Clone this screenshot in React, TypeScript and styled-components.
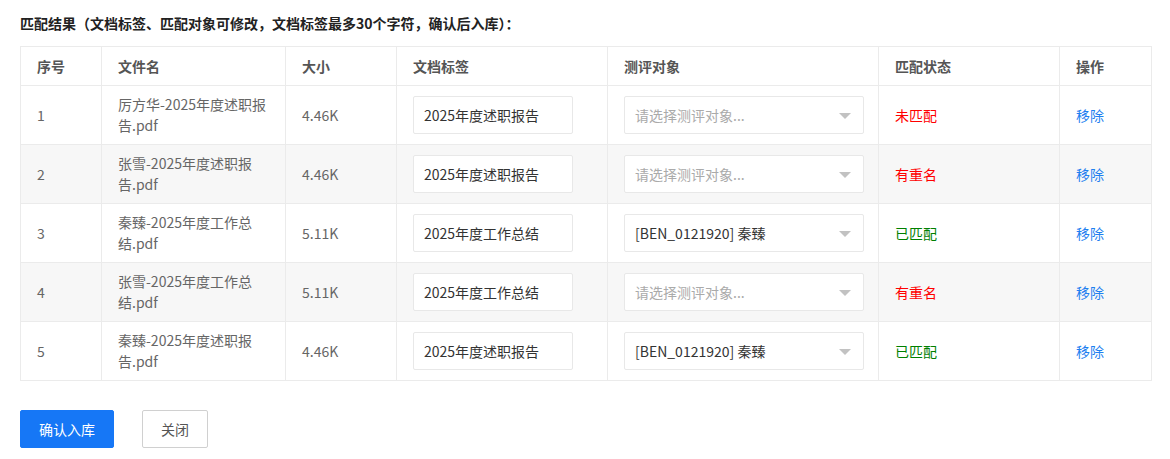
import React, { useState } from 'react';
import styled, { createGlobalStyle } from 'styled-components';

const GlobalStyle = createGlobalStyle`
  body {
    margin: 0;
    background: #fff;
    font-family: "Noto Sans CJK SC", "Noto Sans", sans-serif;
  }
`;

type Status = 'none' | 'dup' | 'ok';

const rows: { name: string; size: string; tag: string; target: string; status: Status }[] = [
  { name: '厉方华-2025年度述职报告.pdf', size: '4.46K', tag: '2025年度述职报告', target: '', status: 'none' },
  { name: '张雪-2025年度述职报告.pdf', size: '4.46K', tag: '2025年度述职报告', target: '', status: 'dup' },
  { name: '秦臻-2025年度工作总结.pdf', size: '5.11K', tag: '2025年度工作总结', target: '[BEN_0121920] 秦臻', status: 'ok' },
  { name: '张雪-2025年度工作总结.pdf', size: '5.11K', tag: '2025年度工作总结', target: '', status: 'dup' },
  { name: '秦臻-2025年度述职报告.pdf', size: '4.46K', tag: '2025年度述职报告', target: '[BEN_0121920] 秦臻', status: 'ok' },
];

const statusText: Record<Status, string> = { none: '未匹配', dup: '有重名', ok: '已匹配' };

const Page = styled.div`
  padding: 12px 20px 10px 20px;
`;

const Heading = styled.div`
  font-size: 14px;
  font-weight: bold;
  color: #222;
  line-height: 22px;
  margin-bottom: 12px;
`;

const Table = styled.table`
  width: 1131px;
  border-collapse: collapse;
  table-layout: fixed;
  font-size: 14px;
`;

const Col = styled.col<{ w: number }>`
  width: ${p => p.w}px;
`;

const Th = styled.th`
  height: 38px;
  padding: 0 16px;
  text-align: left;
  font-weight: bold;
  color: #555;
  border: 1px solid #ebebeb;
`;

const Tr = styled.tr<{ striped: boolean }>`
  background: ${p => (p.striped ? '#f7f7f7' : '#fff')};
`;

const Td = styled.td`
  height: 58px;
  padding: 0 16px;
  color: #666;
  line-height: 21px;
  border: 1px solid #ebebeb;
  vertical-align: middle;
  word-break: break-all;
`;

const TagInput = styled.input`
  box-sizing: border-box;
  width: 160px;
  height: 38px;
  padding: 0 10px;
  border: 1px solid #e8e8e8;
  border-radius: 2px;
  font-family: inherit;
  font-size: 14px;
  color: #333;
  background: #fff;
  outline: none;
`;

const Select = styled.div`
  box-sizing: border-box;
  width: 240px;
  height: 38px;
  padding: 0 12px 0 10px;
  border: 1px solid #e8e8e8;
  border-radius: 2px;
  background: #fff;
  display: flex;
  align-items: center;
  justify-content: space-between;
`;

const SelectText = styled.span<{ placeholder: boolean }>`
  color: ${p => (p.placeholder ? '#aaa' : '#333')};
  font-size: 14px;
`;

const Arrow = styled.span`
  width: 0;
  height: 0;
  border-left: 6px solid transparent;
  border-right: 6px solid transparent;
  border-top: 6px solid #c2c2c2;
  margin-top: 1px;
`;

const StatusLabel = styled.span<{ status: Status }>`
  color: ${p => (p.status === 'ok' ? '#008000' : '#ff0000')};
`;

const Link = styled.a`
  color: #1e7ff0;
  cursor: pointer;
`;

const Actions = styled.div`
  display: flex;
  gap: 28px;
  margin-top: 29px;
`;

const Button = styled.button<{ primary?: boolean }>`
  box-sizing: border-box;
  height: 38px;
  padding: 0 18px;
  font-family: inherit;
  font-size: 14px;
  border-radius: 2px;
  cursor: pointer;
  border: 1px solid ${p => (p.primary ? '#1677f6' : '#d0d0d0')};
  background: ${p => (p.primary ? '#1677f6' : '#fff')};
  color: ${p => (p.primary ? '#fff' : '#555')};
`;

const columns: [string, number][] = [
  ['序号', 81],
  ['文件名', 184],
  ['大小', 111],
  ['文档标签', 211],
  ['测评对象', 271],
  ['匹配状态', 181],
  ['操作', 92],
];

const App: React.FC = () => {
  const [tags, setTags] = useState(rows.map(r => r.tag));

  return (
    <Page>
      <GlobalStyle />
      <Heading>匹配结果（文档标签、匹配对象可修改，文档标签最多30个字符，确认后入库）：</Heading>
      <Table>
        <colgroup>
          {columns.map(([label, w]) => (
            <Col key={label} w={w} />
          ))}
        </colgroup>
        <thead>
          <tr>
            {columns.map(([label]) => (
              <Th key={label}>{label}</Th>
            ))}
          </tr>
        </thead>
        <tbody>
          {rows.map((row, index) => (
            <Tr key={index} striped={index % 2 === 1}>
              <Td>{index + 1}</Td>
              <Td>{row.name}</Td>
              <Td>{row.size}</Td>
              <Td>
                <TagInput
                  value={tags[index]}
                  onChange={e => {
                    const next = [...tags];
                    next[index] = e.target.value;
                    setTags(next);
                  }}
                />
              </Td>
              <Td>
                <Select>
                  <SelectText placeholder={!row.target}>{row.target || '请选择测评对象...'}</SelectText>
                  <Arrow />
                </Select>
              </Td>
              <Td>
                <StatusLabel status={row.status}>{statusText[row.status]}</StatusLabel>
              </Td>
              <Td>
                <Link>移除</Link>
              </Td>
            </Tr>
          ))}
        </tbody>
      </Table>
      <Actions>
        <Button primary>确认入库</Button>
        <Button>关闭</Button>
      </Actions>
    </Page>
  );
};

export default App;
